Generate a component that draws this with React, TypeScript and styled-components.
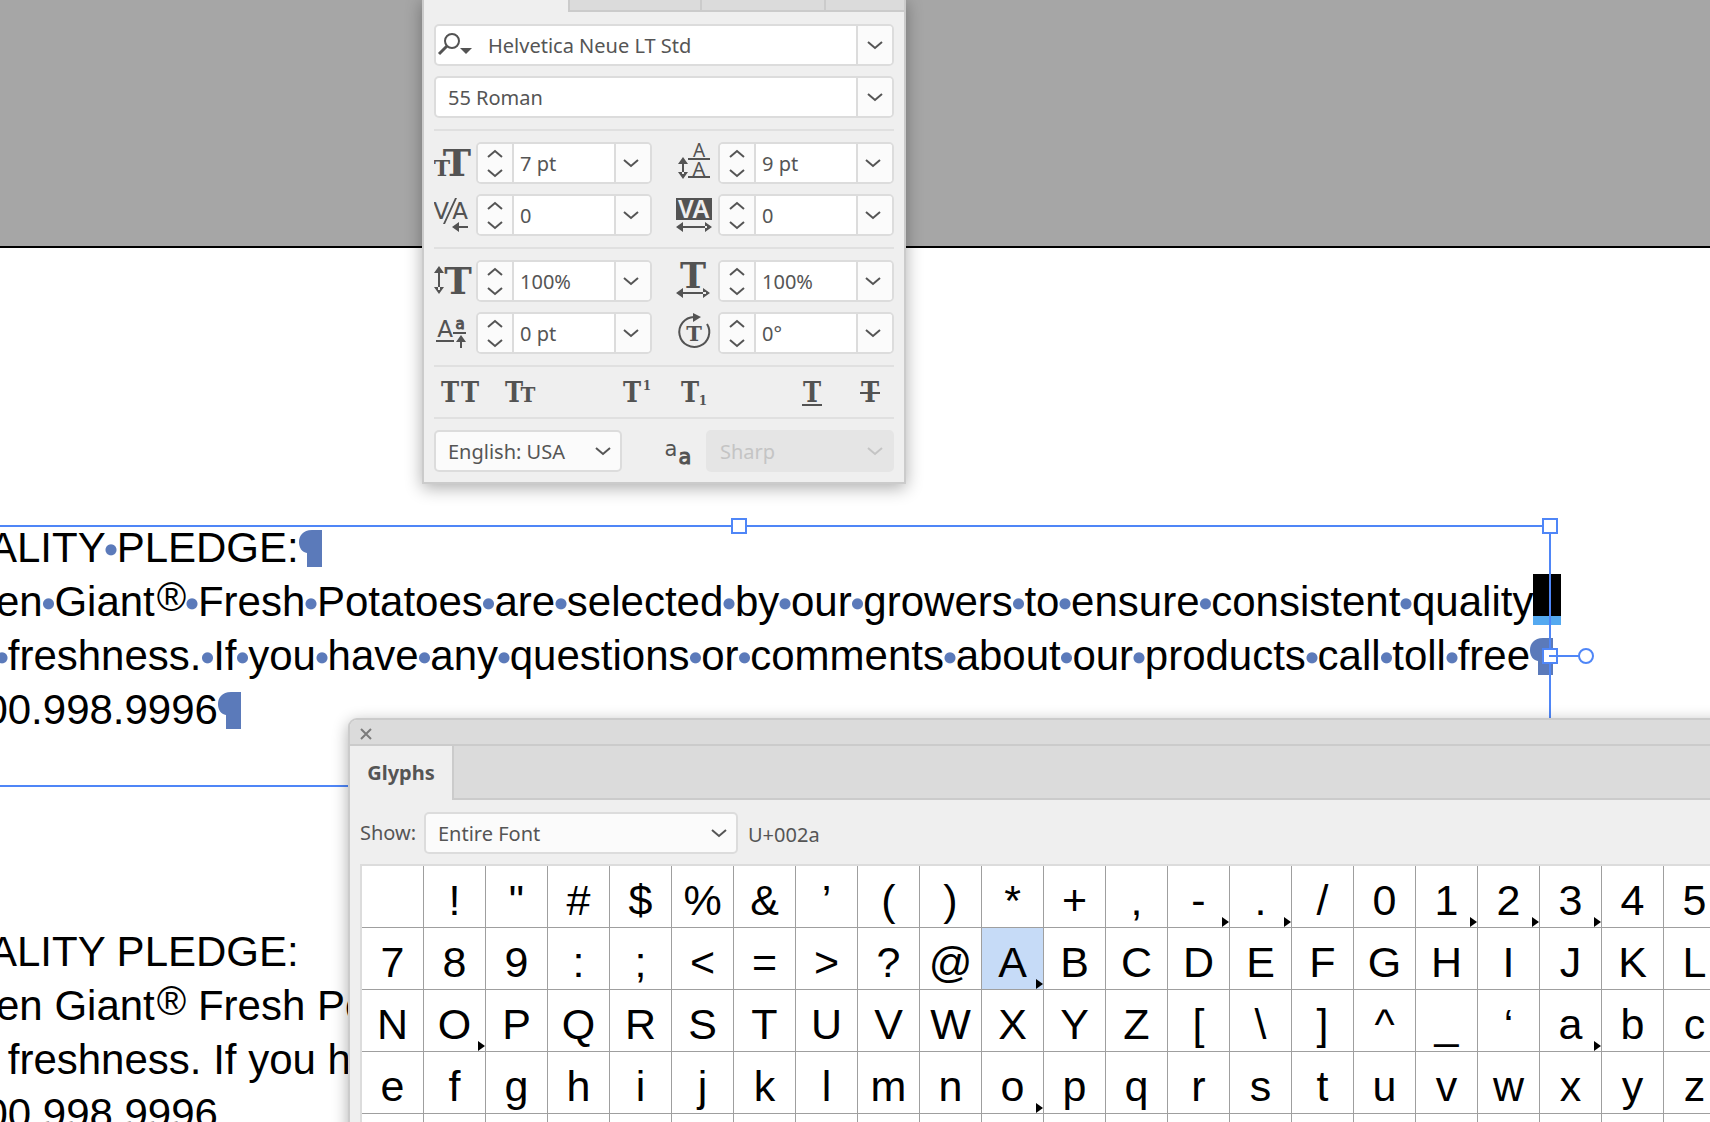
import React from "react";
import styled, { createGlobalStyle } from "styled-components";

const UI_FONT = `"Noto Sans", "Open Sans", sans-serif`;
const DOC_FONT = `"Liberation Sans", Arial, Helvetica, sans-serif`;

const color = {
  pasteboard: "#a6a6a6",
  panel: "#efefef",
  tab: "#dbdbdb",
  edge: "#cbcbcb",
  field: "#dcdcdc",
  soft: "#fbfbfb",
  ink: "#555555",
  icon: "#535353",
  frame: "#4f86f7",
  hidden: "#5b7aba",
  grid: "#9f9f9f",
  picked: "#c6dbf7",
};

const GlobalStyle = createGlobalStyle`
  *, *::before, *::after { box-sizing: border-box; }
  body { margin: 0; overflow: hidden; }
  button, input, select { font: inherit; color: inherit; margin: 0; border-radius: 0; }
`;

/* ---------- Document canvas ---------- */

const Canvas = styled.main`
  position: relative;
  height: 100vh;
  overflow: hidden;
  background: #ffffff;
  font-family: ${DOC_FONT};
`;

const Pasteboard = styled.div`
  height: 248px;
  background: ${color.pasteboard};
  border-bottom: 2px solid #000000;
`;

const TextBlock = styled.div<{ $top: number }>`
  position: absolute;
  top: ${(p) => p.$top}px;
  left: -74px;
  font-size: 42px;
  line-height: 54px;
  white-space: pre;
  color: #000000;
`;

const TextLine = styled.p`
  margin: 0;
  height: 54px;
`;

const DottedSpace = styled.span`
  background: radial-gradient(circle at 50% 55%, ${color.hidden} 5px, transparent 6px);
`;

const Registered = styled.span`
  font-size: 40px;
  line-height: 1;
  vertical-align: 5px;
  margin-left: 2px;
`;

const PilcrowMark = styled.svg`
  width: 23px;
  height: 37px;
  vertical-align: -5px;
  fill: ${color.hidden};
`;

const SelectedBreak = styled.span`
  display: inline-block;
  width: 28px;
  height: 51px;
  margin-top: -10px;
  vertical-align: -9px;
  background: #000000;
  border-bottom: 9px solid #54a9f0;
`;

const TextFrame = styled.div`
  position: absolute;
  top: 525px;
  left: -74px;
  width: 1625px;
  height: 262px;
  border: 2px solid ${color.frame};
`;

const Handle = styled.span<{ $x: string; $y: string; $round?: boolean }>`
  position: absolute;
  left: ${(p) => p.$x};
  top: ${(p) => p.$y};
  width: 16px;
  height: 16px;
  transform: translate(-50%, -50%);
  border: 2px solid ${color.frame};
  border-radius: ${(p) => (p.$round ? "50%" : "0")};
  background: #ffffff;
`;

const PortLine = styled.span`
  position: absolute;
  left: 100%;
  top: 50%;
  width: 30px;
  height: 2px;
  transform: translateY(-50%);
  background: ${color.frame};
`;

/* ---------- Shared panel parts ---------- */

const Panel = styled.section`
  position: absolute;
  background: ${color.panel};
  border: 2px solid ${color.edge};
  box-shadow: 0 4px 16px rgba(0, 0, 0, 0.32);
  font-family: ${UI_FONT};
  font-size: 20px;
  line-height: 28px;
  color: ${color.ink};
`;

const Field = styled.div`
  display: flex;
  height: 42px;
  border: 2px solid ${color.field};
  border-radius: 5px;
  background: #ffffff;
  overflow: hidden;
`;

const FieldInput = styled.input<{ $pad: number }>`
  flex: 1;
  min-width: 0;
  border: 0;
  outline: 0;
  background: transparent;
  padding: 1px 0 0 ${(p) => p.$pad}px;
`;

const DropButton = styled.button<{ $narrow?: boolean }>`
  display: grid;
  place-items: center;
  width: 36px;
  padding: 0 ${(p) => (p.$narrow ? 4 : 0)}px 0 0;
  border: 0;
  border-left: 2px solid ${color.field};
  background: ${color.soft};
`;

const StepColumn = styled.div`
  display: grid;
  grid-template-rows: 1fr 1fr;
  width: 36px;
  border-right: 2px solid ${color.field};
  background: ${color.soft};
`;

const StepButton = styled.button`
  display: grid;
  place-items: center;
  padding: 0;
  border: 0;
  background: transparent;
`;

const ChevronSvg = styled.svg<{ $up?: boolean }>`
  display: block;
  width: 16px;
  height: 10px;
  fill: none;
  stroke: currentColor;
  stroke-width: 2;
  transform: ${(p) => (p.$up ? "rotate(180deg)" : "none")};
`;

const SelectBox = styled.div<{ $w: number; $off?: boolean }>`
  display: grid;
  grid-template-columns: 1fr 34px;
  align-items: center;
  width: ${(p) => p.$w}px;
  height: 42px;
  border: 2px solid ${(p) => (p.$off ? "#e5e5e5" : color.field)};
  border-radius: 5px;
  background: ${(p) => (p.$off ? "#e5e5e5" : color.soft)};
  color: ${(p) => (p.$off ? "#c4c4c4" : color.ink)};
`;

const SelectControl = styled.select`
  grid-area: 1 / 1 / 2 / 3;
  height: 38px;
  padding: 1px 34px 0 12px;
  appearance: none;
  border: 0;
  outline: 0;
  background: transparent;
  opacity: 1;
`;

const SelectArrow = styled.span`
  grid-area: 1 / 2;
  pointer-events: none;
  display: grid;
  place-items: center;
`;

/* ---------- Character panel ---------- */

const CharacterPanel = styled(Panel)`
  top: -2px;
  left: 422px;
  width: 484px;
`;

const TabStrip = styled.div`
  display: grid;
  grid-template-columns: 144px 132px 124px 1fr;
  height: 12px;
`;

const TabStub = styled.div<{ $active?: boolean }>`
  background: ${(p) => (p.$active ? color.panel : color.tab)};
  border: 0 solid ${color.edge};
  border-width: ${(p) => (p.$active ? "0" : "0 0 2px 2px")};
`;

const PanelBody = styled.div`
  display: flex;
  flex-direction: column;
  gap: 10px;
  padding: 12px 10px 10px;
`;

const Rule = styled.hr`
  width: 100%;
  height: 2px;
  margin: 1px 0;
  border: 0;
  background: #e0e0e0;
`;

const MetricGrid = styled.div`
  display: grid;
  grid-template-columns: 1fr 1fr;
  gap: 10px 24px;
`;

const Metric = styled.div`
  display: grid;
  grid-template-columns: 42px 1fr;
`;

const Icon = styled.svg`
  display: block;
  width: 42px;
  height: 42px;
  fill: ${color.icon};
  stroke: none;
`;

const SearchIcon = styled.svg`
  width: 38px;
  height: 38px;
  flex: none;
  fill: none;
  stroke: ${color.icon};
  stroke-width: 2;
`;

const StyleRow = styled.div`
  display: flex;
  justify-content: space-between;
  height: 28px;
  padding: 0 0 0 2px;
`;

const StylePair = styled.div`
  display: flex;
  gap: 10px;
`;

const StyleButton = styled.button`
  width: 48px;
  height: 28px;
  padding: 0;
  border: 0;
  background: transparent;
`;

const StyleIcon = styled.svg`
  display: block;
  width: 48px;
  height: 28px;
  fill: ${color.icon};
`;

const LanguageRow = styled.div`
  display: grid;
  grid-template-columns: auto 1fr auto;
  justify-items: end;
`;

/* ---------- Glyphs panel ---------- */

const GlyphsPanel = styled(Panel)`
  top: 718px;
  left: 348px;
  right: -24px;
  bottom: -24px;
  border-radius: 9px 0 0 0;
  overflow: hidden;
`;

const TitleBar = styled.div`
  display: flex;
  align-items: center;
  height: 26px;
  padding: 4px 0 0 8px;
  background: ${color.tab};
  border-bottom: 2px solid ${color.edge};
`;

const CloseButton = styled.button`
  display: grid;
  place-items: center;
  width: 16px;
  height: 16px;
  padding: 0;
  border: 0;
  background: transparent;
`;

const CloseSvg = styled.svg`
  width: 12px;
  height: 12px;
  stroke: #7b7b7b;
  stroke-width: 2;
`;

const GlyphTabs = styled.div`
  display: flex;
  height: 54px;
`;

const GlyphTab = styled.button`
  width: 102px;
  padding: 0;
  border: 0;
  background: ${color.panel};
  font-weight: 700;
`;

const TabFiller = styled.div`
  flex: 1;
  background: ${color.tab};
  border: solid ${color.edge};
  border-width: 0 0 2px 2px;
`;

const GlyphToolbar = styled.div`
  display: flex;
  align-items: center;
  gap: 10px;
  padding: 12px 10px 10px;
`;

const ShowLabel = styled.label`
  width: 54px;
  white-space: nowrap;
`;

const CodePoint = styled.output`
  padding-top: 4px;
`;

const GlyphGrid = styled.div`
  display: grid;
  grid-template-columns: repeat(23, 62px);
  grid-auto-rows: 62px;
  margin-left: 10px;
  border: solid ${color.field};
  border-width: 2px 0 0 2px;
  background: #ffffff;
`;

const GlyphCell = styled.button<{ $picked?: boolean; $alternates?: boolean }>`
  position: relative;
  padding: 6px 0 0;
  border: solid ${color.grid};
  border-width: 0 1px 1px 0;
  background: ${(p) => (p.$picked ? color.picked : "#ffffff")};
  color: #000000;
  font-family: ${DOC_FONT};
  font-size: 43px;
  line-height: 52px;
  text-align: center;

  &::after {
    content: ${(p) => (p.$alternates ? '""' : "none")};
    position: absolute;
    right: 0;
    bottom: 0;
    border: solid transparent;
    border-width: 5px 0 5px 7px;
    border-left-color: #000000;
  }
`;

/* ---------- Pieces ---------- */

const Chevron = ({ up }: { up?: boolean }) => (
  <ChevronSvg $up={up} viewBox="0 0 16 10" aria-hidden="true">
    <path d="M1 2 L8 8 L15 2" />
  </ChevronSvg>
);

const Pilcrow = () => (
  <PilcrowMark viewBox="0 0 23 37" aria-label="End of paragraph">
    <path d="M23 0 H13 C4 0 0 6 0 12 C0 18 3 22 8 23 V37 H23 Z" />
  </PilcrowMark>
);

const Hidden = ({ text }: { text: string }) => (
  <>
    {text.split(/( )/).map((part, i) =>
      part === " " ? <DottedSpace key={i}> </DottedSpace> : part
    )}
  </>
);

const slab = { fontFamily: "DejaVu Serif", fontWeight: 700, textAnchor: "middle" as const };
const sans = { fontFamily: "Noto Sans", textAnchor: "middle" as const };
const wide = { fontFamily: "DejaVu Sans", textAnchor: "middle" as const };

const icons: Record<string, React.ReactNode> = {
  size: (
    <>
      <text {...slab} x="8" y="34" fontSize="22">T</text>
      <text {...slab} x="23" y="34" fontSize="38">T</text>
    </>
  ),
  leading: (
    <>
      <text {...sans} x="23" y="15" fontSize="19">A</text>
      <text {...sans} x="23" y="34" fontSize="20">A</text>
      <path d="M12 16h22v2h-22zM12 34h22v2h-22zM6 20h2v12h-2zM7 15l5 7h-10zM7 37l5-7h-10z" />
    </>
  ),
  kerning: (
    <>
      <text {...wide} x="7" y="25" fontSize="23">V</text>
      <text {...wide} x="26" y="25" fontSize="23">A</text>
      <path d="M9 30L21 4h2L11 30zM22 32h12v2h-12zM18 33l7-5v10z" />
    </>
  ),
  tracking: (
    <>
      <path d="M0 4h36v22h-36zM5 32h26v2h-26zM0 33l7-5v10zM36 33l-7-5v10z" />
      <text {...sans} x="10" y="24" fontSize="25" fontWeight="600" fill="#efefef">V</text>
      <text {...sans} x="25" y="24" fontSize="25" fontWeight="600" fill="#efefef">A</text>
    </>
  ),
  vscale: (
    <>
      <path d="M4 10h2v20h-2zM5 6l5 7h-10zM5 34l5-7h-10z" />
      <text {...slab} x="24" y="34" fontSize="37">T</text>
    </>
  ),
  hscale: (
    <>
      <text {...slab} x="17" y="28" fontSize="35">T</text>
      <path d="M4 32h26v2h-26zM0 33l7-5v10zM34 33l-7-5v10z" />
    </>
  ),
  baseline: (
    <>
      <text {...wide} x="11" y="25" fontSize="23">A</text>
      <text {...wide} x="26" y="17" fontSize="15" stroke={color.icon}>a</text>
      <path d="M2 28h18v2h-18zM19 20h13v2h-13zM26 28h2v8h-2zM27 23l5 7h-10z" />
    </>
  ),
  rotate: (
    <>
      <path d="M31 12A15 15 0 1 1 18 5" fill="none" stroke={color.icon} strokeWidth="2" />
      <path d="M17 1l8 4-8 5z" />
      <text {...slab} x="18" y="29" fontSize="21">T</text>
    </>
  ),
};

const metrics = [
  { id: "size", label: "Font size", value: "7 pt" },
  { id: "leading", label: "Leading", value: "9 pt" },
  { id: "kerning", label: "Kerning", value: "0" },
  { id: "tracking", label: "Tracking", value: "0" },
  { id: "vscale", label: "Vertical scale", value: "100%" },
  { id: "hscale", label: "Horizontal scale", value: "100%" },
  { id: "baseline", label: "Baseline shift", value: "0 pt" },
  { id: "rotate", label: "Character rotation", value: "0°" },
];

const MetricField = ({ id, label, value }: (typeof metrics)[number]) => (
  <Metric>
    <Icon viewBox="0 0 42 42" aria-hidden="true">{icons[id]}</Icon>
    <Field>
      <StepColumn>
        <StepButton type="button" aria-label={`Increase ${label}`}><Chevron up /></StepButton>
        <StepButton type="button" aria-label={`Decrease ${label}`}><Chevron /></StepButton>
      </StepColumn>
      <FieldInput $pad={6} aria-label={label} defaultValue={value} />
      <DropButton $narrow type="button" aria-label={`${label} presets`}><Chevron /></DropButton>
    </Field>
  </Metric>
);

const cap = { ...slab, fontSize: 27 };
const narrowCap = { ...cap, fontFamily: "DejaVu Serif Condensed, DejaVu Serif" };

const styleGroups: { label: string; art: React.ReactNode }[][] = [
  [
    {
      label: "All caps",
      art: (
        <>
          <text {...narrowCap} x="14" y="24">T</text>
          <text {...narrowCap} x="34" y="24">T</text>
        </>
      ),
    },
    {
      label: "Small caps",
      art: (
        <>
          <text {...narrowCap} x="20" y="24">T</text>
          <text {...slab} fontSize="20" x="34" y="24">T</text>
        </>
      ),
    },
  ],
  [
    {
      label: "Superscript",
      art: (
        <>
          <text {...narrowCap} x="20" y="24">T</text>
          <text {...slab} fontSize="12" x="35" y="12">1</text>
        </>
      ),
    },
    {
      label: "Subscript",
      art: (
        <>
          <text {...narrowCap} x="20" y="24">T</text>
          <text {...slab} fontSize="12" x="33" y="27">1</text>
        </>
      ),
    },
  ],
  [
    {
      label: "Underline",
      art: (
        <>
          <text {...narrowCap} x="24" y="24">T</text>
          <path d="M14 26h20v2h-20z" />
        </>
      ),
    },
    {
      label: "Strikethrough",
      art: (
        <>
          <text {...narrowCap} x="24" y="24">T</text>
          <path d="M14 14h20v2h-20z" />
        </>
      ),
    },
  ],
];

const glyphRows = [
  " !\"#$%&’()*+,-./0123456",
  "789:;<=>?@ABCDEFGHIJKLM",
  "NOPQRSTUVWXYZ[\\]^_‘abcd",
  "efghijklmnopqrstuvwxyz{",
  " ".repeat(23),
];
const withAlternates = new Set("-.123AOao");

export default function App() {
  return (
    <Canvas>
      <GlobalStyle />
      <Pasteboard />

      <TextBlock $top={521}>
        <TextLine><Hidden text="QUALITY PLEDGE:" /><Pilcrow /></TextLine>
        <TextLine>
          <Hidden text="Green Giant" /><Registered>®</Registered>
          <Hidden text=" Fresh Potatoes are selected by our growers to ensure consistent quality" />
          <SelectedBreak />
        </TextLine>
        <TextLine>
          <Hidden text="and freshness. If you have any questions or comments about our products call toll free" />
          <Pilcrow />
        </TextLine>
        <TextLine>1.800.998.9996<Pilcrow /></TextLine>
      </TextBlock>

      <TextFrame>
        <Handle $x="50%" $y="-1px" />
        <Handle $x="calc(100% + 1px)" $y="-1px" />
        <Handle $x="calc(100% + 1px)" $y="50%" />
        <PortLine />
        <Handle $x="calc(100% + 37px)" $y="50%" $round />
      </TextFrame>

      <TextBlock $top={925}>
        <TextLine>QUALITY PLEDGE:</TextLine>
        <TextLine>Green Giant<Registered>®</Registered> Fresh Po</TextLine>
        <TextLine>and freshness. If you h</TextLine>
        <TextLine>1.800.998.9996</TextLine>
      </TextBlock>

      <CharacterPanel aria-label="Character">
        <TabStrip>
          <TabStub $active />
          <TabStub />
          <TabStub />
          <TabStub />
        </TabStrip>
        <PanelBody>
          <Field>
            <SearchIcon viewBox="0 0 38 38" aria-hidden="true">
              <circle cx="16" cy="15" r="7" />
              <path d="M11 20 L3 28" strokeWidth="3" />
              <path d="M24 22h12l-6 6z" fill={color.icon} stroke="none" />
            </SearchIcon>
            <FieldInput $pad={14} aria-label="Font family" defaultValue="Helvetica Neue LT Std" />
            <DropButton type="button" aria-label="Font families"><Chevron /></DropButton>
          </Field>
          <Field>
            <FieldInput $pad={12} aria-label="Font style" defaultValue="55 Roman" />
            <DropButton type="button" aria-label="Font styles"><Chevron /></DropButton>
          </Field>
          <Rule />
          <MetricGrid>{metrics.slice(0, 4).map((m) => <MetricField key={m.id} {...m} />)}</MetricGrid>
          <Rule />
          <MetricGrid>{metrics.slice(4).map((m) => <MetricField key={m.id} {...m} />)}</MetricGrid>
          <Rule />
          <StyleRow>
            {styleGroups.map((group, i) => (
              <StylePair key={i}>
                {group.map((s) => (
                  <StyleButton key={s.label} type="button" aria-label={s.label}>
                    <StyleIcon viewBox="0 0 48 28" aria-hidden="true">{s.art}</StyleIcon>
                  </StyleButton>
                ))}
              </StylePair>
            ))}
          </StyleRow>
          <Rule />
          <LanguageRow>
            <SelectBox $w={188}>
              <SelectControl aria-label="Language" defaultValue="en">
                <option value="en">English: USA</option>
              </SelectControl>
              <SelectArrow><Chevron /></SelectArrow>
            </SelectBox>
            <Icon viewBox="0 0 42 42" aria-hidden="true">
              <text {...wide} x="7" y="26" fontSize="21">a</text>
              <text {...wide} x="21" y="34" fontSize="21" stroke={color.icon}>a</text>
            </Icon>
            <SelectBox $w={188} $off>
              <SelectControl aria-label="Anti-aliasing" defaultValue="sharp" disabled>
                <option value="sharp">Sharp</option>
              </SelectControl>
              <SelectArrow><Chevron /></SelectArrow>
            </SelectBox>
          </LanguageRow>
        </PanelBody>
      </CharacterPanel>

      <GlyphsPanel aria-label="Glyphs">
        <TitleBar>
          <CloseButton type="button" aria-label="Close">
            <CloseSvg viewBox="0 0 12 12"><path d="M1 1 L11 11 M11 1 L1 11" /></CloseSvg>
          </CloseButton>
        </TitleBar>
        <GlyphTabs>
          <GlyphTab type="button">Glyphs</GlyphTab>
          <TabFiller />
        </GlyphTabs>
        <GlyphToolbar>
          <ShowLabel htmlFor="show">Show:</ShowLabel>
          <SelectBox $w={314}>
            <SelectControl id="show" defaultValue="all">
              <option value="all">Entire Font</option>
            </SelectControl>
            <SelectArrow><Chevron /></SelectArrow>
          </SelectBox>
          <CodePoint>U+002a</CodePoint>
        </GlyphToolbar>
        <GlyphGrid>
          {glyphRows.map((row, r) =>
            Array.from(row).map((g, c) => (
              <GlyphCell
                key={`${r}-${c}`}
                type="button"
                $picked={g === "A"}
                $alternates={withAlternates.has(g)}
              >
                {g.trim()}
              </GlyphCell>
            ))
          )}
        </GlyphGrid>
      </GlyphsPanel>
    </Canvas>
  );
}
